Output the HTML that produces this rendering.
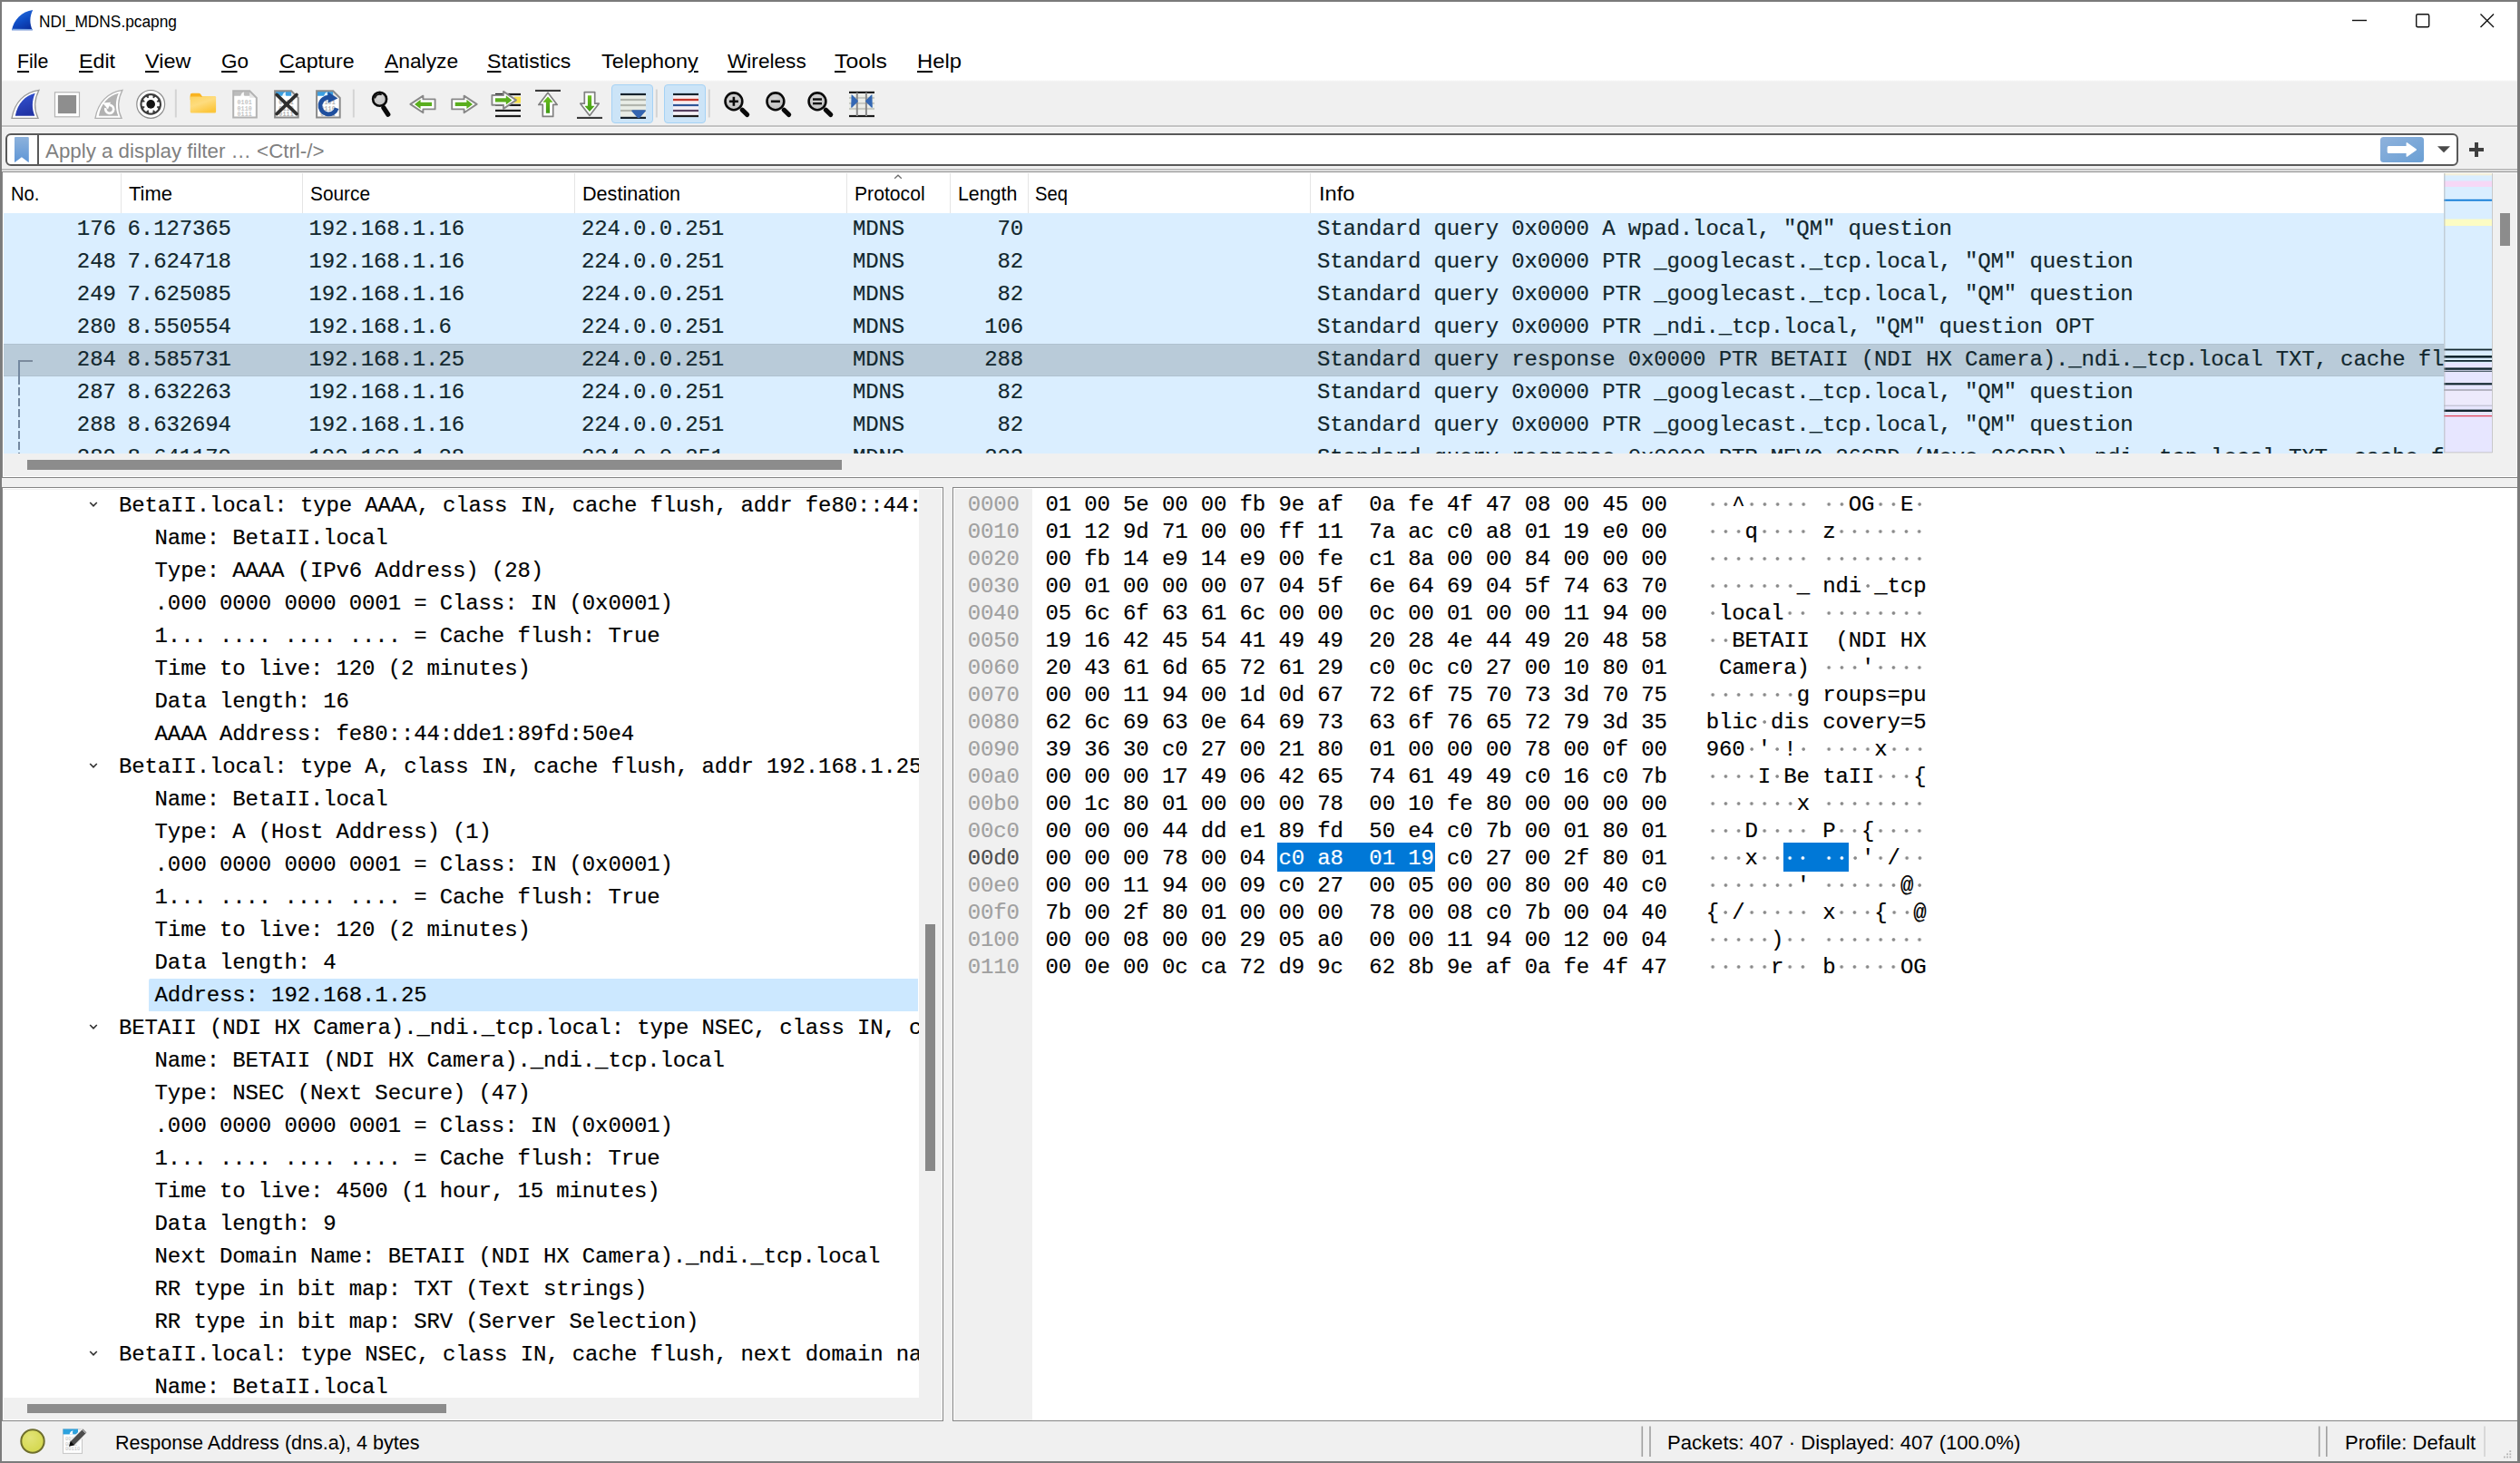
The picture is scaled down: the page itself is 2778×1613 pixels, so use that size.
<!DOCTYPE html>
<html><head><meta charset="utf-8"><title>NDI_MDNS.pcapng</title>
<style>
html,body{margin:0;padding:0}
body{width:2778px;height:1613px;position:relative;overflow:hidden;background:#f0f0f0;font-family:'Liberation Sans', sans-serif}
div,svg{box-sizing:border-box}
.a{position:absolute}
.s{position:absolute;white-space:pre;font-family:'Liberation Sans', sans-serif;transform-origin:0 0}
.s u{text-decoration-thickness:1.5px;text-underline-offset:2.5px}
.dg,.dw{color:transparent;background-size:14.28px 24.0px;background-repeat:repeat-x;background-position:0 1.6px}
.dg{background-image:radial-gradient(circle at 50% 50%,#8a8a8a 0,#8a8a8a 1.35px,rgba(138,138,138,0) 2.25px)}
.dw{background-image:radial-gradient(circle at 50% 50%,#fff 0,#fff 1.35px,rgba(255,255,255,0) 2.25px)}
.m{position:absolute;white-space:pre;-webkit-text-stroke:0.18px;font-family:'Liberation Mono', monospace;font-size:24.0px;line-height:24.0px;letter-spacing:-0.1226px}
</style></head><body>
<!-- title + menu -->
<div class="a" style="left:0;top:0;width:2778px;height:88.5px;background:#fff"></div>
<div class="a" style="left:0;top:88px;width:2778px;height:2px;background:linear-gradient(#fff,#f0f0f0)"></div>
<!-- toolbar bottom line -->
<div class="a" style="left:0;top:138px;width:2778px;height:2px;background:#c3c3c3"></div>
<div class="a" style="left:0;top:140px;width:2778px;height:1px;background:#f8f8f8"></div>
<!-- filter box -->
<div class="a" style="left:6px;top:147px;width:2704px;height:36px;background:#fff;border:2px solid #595959;border-radius:6px"></div>
<div class="a" style="left:41px;top:149px;width:2px;height:32px;background:#595959"></div>
<div class="a" style="left:0;top:186px;width:2778px;height:2px;background:#bfbfbf"></div>
<div class="a" style="left:0;top:188px;width:2778px;height:1px;background:#fafafa"></div>
<div class="a" style="left:0;top:189px;width:2778px;height:1.5px;background:#828282"></div>
<!-- packet list frame -->
<div class="a" style="left:2px;top:190px;width:2774px;height:337px;background:#f0f0f0;border:1px solid #858585;border-top:none;box-shadow:inset 0 0 0 1px #fff"></div>
<div class="a" style="left:3px;top:190px;width:2691px;height:46px;background:#fff"></div>
<div class="a" style="left:133px;top:191px;width:1px;height:44px;background:#e5e5e5"></div><div class="a" style="left:333px;top:191px;width:1px;height:44px;background:#e5e5e5"></div><div class="a" style="left:633px;top:191px;width:1px;height:44px;background:#e5e5e5"></div><div class="a" style="left:933px;top:191px;width:1px;height:44px;background:#e5e5e5"></div><div class="a" style="left:1047px;top:191px;width:1px;height:44px;background:#e5e5e5"></div><div class="a" style="left:1133px;top:191px;width:1px;height:44px;background:#e5e5e5"></div><div class="a" style="left:1444px;top:191px;width:1px;height:44px;background:#e5e5e5"></div>
<div id="plist" style="position:absolute;left:4px;top:235.2px;width:2690px;height:264.6px;overflow:hidden;background:#daeeff">
<div class="m" style="left:80.86px;top:5.89px;color:#12272e;">176</div>
<div class="m" style="left:136.60px;top:5.89px;color:#12272e;">6.127365</div>
<div class="m" style="left:336.60px;top:5.89px;color:#12272e;">192.168.1.16</div>
<div class="m" style="left:637.00px;top:5.89px;color:#12272e;">224.0.0.251</div>
<div class="m" style="left:936.00px;top:5.89px;color:#12272e;">MDNS</div>
<div class="m" style="left:1095.54px;top:5.89px;color:#12272e;">70</div>
<div class="m" style="left:1448.00px;top:5.89px;color:#12272e;">Standard query 0x0000 A wpad.local, &quot;QM&quot; question</div>
<div class="m" style="left:80.86px;top:41.89px;color:#12272e;">248</div>
<div class="m" style="left:136.60px;top:41.89px;color:#12272e;">7.624718</div>
<div class="m" style="left:336.60px;top:41.89px;color:#12272e;">192.168.1.16</div>
<div class="m" style="left:637.00px;top:41.89px;color:#12272e;">224.0.0.251</div>
<div class="m" style="left:936.00px;top:41.89px;color:#12272e;">MDNS</div>
<div class="m" style="left:1095.54px;top:41.89px;color:#12272e;">82</div>
<div class="m" style="left:1448.00px;top:41.89px;color:#12272e;">Standard query 0x0000 PTR _googlecast._tcp.local, &quot;QM&quot; question</div>
<div class="m" style="left:80.86px;top:77.89px;color:#12272e;">249</div>
<div class="m" style="left:136.60px;top:77.89px;color:#12272e;">7.625085</div>
<div class="m" style="left:336.60px;top:77.89px;color:#12272e;">192.168.1.16</div>
<div class="m" style="left:637.00px;top:77.89px;color:#12272e;">224.0.0.251</div>
<div class="m" style="left:936.00px;top:77.89px;color:#12272e;">MDNS</div>
<div class="m" style="left:1095.54px;top:77.89px;color:#12272e;">82</div>
<div class="m" style="left:1448.00px;top:77.89px;color:#12272e;">Standard query 0x0000 PTR _googlecast._tcp.local, &quot;QM&quot; question</div>
<div class="m" style="left:80.86px;top:113.89px;color:#12272e;">280</div>
<div class="m" style="left:136.60px;top:113.89px;color:#12272e;">8.550554</div>
<div class="m" style="left:336.60px;top:113.89px;color:#12272e;">192.168.1.6</div>
<div class="m" style="left:637.00px;top:113.89px;color:#12272e;">224.0.0.251</div>
<div class="m" style="left:936.00px;top:113.89px;color:#12272e;">MDNS</div>
<div class="m" style="left:1081.26px;top:113.89px;color:#12272e;">106</div>
<div class="m" style="left:1448.00px;top:113.89px;color:#12272e;">Standard query 0x0000 PTR _ndi._tcp.local, &quot;QM&quot; question OPT</div>
<div style="position:absolute;left:0px;top:144px;width:2700px;height:35.8px;background:#b9cbd9;border-top:1px solid #afc1d0;border-bottom:1px solid #afc1d0"></div>
<div class="m" style="left:80.86px;top:149.89px;color:#12272e;">284</div>
<div class="m" style="left:136.60px;top:149.89px;color:#12272e;">8.585731</div>
<div class="m" style="left:336.60px;top:149.89px;color:#12272e;">192.168.1.25</div>
<div class="m" style="left:637.00px;top:149.89px;color:#12272e;">224.0.0.251</div>
<div class="m" style="left:936.00px;top:149.89px;color:#12272e;">MDNS</div>
<div class="m" style="left:1081.26px;top:149.89px;color:#12272e;">288</div>
<div class="m" style="left:1448.00px;top:149.89px;color:#12272e;">Standard query response 0x0000 PTR BETAII (NDI HX Camera)._ndi._tcp.local TXT, cache flush</div>
<div class="m" style="left:80.86px;top:185.89px;color:#12272e;">287</div>
<div class="m" style="left:136.60px;top:185.89px;color:#12272e;">8.632263</div>
<div class="m" style="left:336.60px;top:185.89px;color:#12272e;">192.168.1.16</div>
<div class="m" style="left:637.00px;top:185.89px;color:#12272e;">224.0.0.251</div>
<div class="m" style="left:936.00px;top:185.89px;color:#12272e;">MDNS</div>
<div class="m" style="left:1095.54px;top:185.89px;color:#12272e;">82</div>
<div class="m" style="left:1448.00px;top:185.89px;color:#12272e;">Standard query 0x0000 PTR _googlecast._tcp.local, &quot;QM&quot; question</div>
<div class="m" style="left:80.86px;top:221.89px;color:#12272e;">288</div>
<div class="m" style="left:136.60px;top:221.89px;color:#12272e;">8.632694</div>
<div class="m" style="left:336.60px;top:221.89px;color:#12272e;">192.168.1.16</div>
<div class="m" style="left:637.00px;top:221.89px;color:#12272e;">224.0.0.251</div>
<div class="m" style="left:936.00px;top:221.89px;color:#12272e;">MDNS</div>
<div class="m" style="left:1095.54px;top:221.89px;color:#12272e;">82</div>
<div class="m" style="left:1448.00px;top:221.89px;color:#12272e;">Standard query 0x0000 PTR _googlecast._tcp.local, &quot;QM&quot; question</div>
<div class="m" style="left:80.86px;top:257.89px;color:#12272e;">289</div>
<div class="m" style="left:136.60px;top:257.89px;color:#12272e;">8.641179</div>
<div class="m" style="left:336.60px;top:257.89px;color:#12272e;">192.168.1.28</div>
<div class="m" style="left:637.00px;top:257.89px;color:#12272e;">224.0.0.251</div>
<div class="m" style="left:936.00px;top:257.89px;color:#12272e;">MDNS</div>
<div class="m" style="left:1081.26px;top:257.89px;color:#12272e;">223</div>
<div class="m" style="left:1448.00px;top:257.89px;color:#12272e;">Standard query response 0x0000 PTR MEVO-26GBD (Mevo-26GBD)._ndi._tcp.local TXT, cache flush</div>
</div>
<!-- related packet marker -->
<div class="a" style="left:20px;top:397px;width:16px;height:2px;background:#7b8b9d"></div>
<div class="a" style="left:20px;top:397px;width:2px;height:27px;background:#7388a0"></div>
<div class="a" style="left:20px;top:427px;width:2px;height:72.8px;background:repeating-linear-gradient(#7388a0 0 9.3px,transparent 9.3px 12px)"></div>
<!-- hscroll thumb -->
<div class="a" style="left:30px;top:507px;width:898px;height:11px;background:#8c8c8c"></div>
<!-- minimap -->
<svg class="a" style="left:2690px;top:188px" width="62" height="316" viewBox="2690 188 62 316"><rect x="2694" y="191" width="53.5" height="308" fill="#daeeff"/><rect x="2694" y="191" width="53.5" height="2.4" fill="#f4f0dc"/><rect x="2694" y="199.5" width="53.5" height="6.5" fill="#f6d8f6"/><rect x="2694" y="400" width="53.5" height="99" fill="#e7e6ff"/><rect x="2694" y="219.8" width="53.5" height="1.8" fill="#0a78d6"/><rect x="2694" y="241.6" width="53.5" height="7.4" fill="#fcfcc4"/><rect x="2694" y="384.6" width="53.5" height="1.8" fill="#12272e"/><rect x="2694" y="392" width="53.5" height="2.6" fill="#12272e"/><rect x="2694" y="397" width="53.5" height="1.8" fill="#12272e"/><rect x="2694" y="405.4" width="53.5" height="2.4" fill="#12272e"/><rect x="2694" y="408.8" width="53.5" height="0.9" fill="#12272e"/><rect x="2694" y="422.2" width="53.5" height="2.2" fill="#12272e"/><rect x="2694" y="429.2" width="53.5" height="1.6" fill="#a8a8b4"/><rect x="2694" y="446.6" width="53.5" height="1" fill="#b0b0bc"/><rect x="2694" y="451.6" width="53.5" height="2.4" fill="#12272e"/><rect x="2694" y="458.2" width="53.5" height="1" fill="#e02030"/><rect x="2694" y="431" width="53.5" height="15.4" fill="#edeafc"/><rect x="2694.4" y="191" width="0.9" height="308" fill="#b4b8bc"/><rect x="2747" y="191" width="0.9" height="308" fill="#c4c4c4"/><rect x="2694" y="498.4" width="53.5" height="0.9" fill="#c4c4c4"/></svg>
<!-- vscroll thumb -->
<div class="a" style="left:2756px;top:235px;width:11px;height:36px;background:#8c8c8c"></div>
<!-- tree frame -->
<div class="a" style="left:2px;top:537px;width:1038px;height:1030px;background:#f0f0f0;border:1px solid #858585;box-shadow:inset 0 0 0 1px #fff"></div>
<div id="tree" style="position:absolute;left:3px;top:539.5px;width:1010.1px;height:1001.5px;overflow:hidden;background:#fff">
<svg style="position:absolute;left:93.4px;top:9.7px" width="14" height="14" viewBox="0 0 14 14"><path d="M3.2 5 L7 8.9 L10.8 5" fill="none" stroke="#2e2e2e" stroke-width="1.55"/></svg>
<div class="m" style="left:128.00px;top:6.49px;color:#000;">BetaII.local: type AAAA, class IN, cache flush, addr fe80::44:dde1:89fd:50e4</div>
<div class="m" style="left:167.60px;top:42.49px;color:#000;">Name: BetaII.local</div>
<div class="m" style="left:167.60px;top:78.49px;color:#000;">Type: AAAA (IPv6 Address) (28)</div>
<div class="m" style="left:167.60px;top:114.49px;color:#000;">.000 0000 0000 0001 = Class: IN (0x0001)</div>
<div class="m" style="left:167.60px;top:150.49px;color:#000;">1... .... .... .... = Cache flush: True</div>
<div class="m" style="left:167.60px;top:186.49px;color:#000;">Time to live: 120 (2 minutes)</div>
<div class="m" style="left:167.60px;top:222.49px;color:#000;">Data length: 16</div>
<div class="m" style="left:167.60px;top:258.49px;color:#000;">AAAA Address: fe80::44:dde1:89fd:50e4</div>
<svg style="position:absolute;left:93.4px;top:297.7px" width="14" height="14" viewBox="0 0 14 14"><path d="M3.2 5 L7 8.9 L10.8 5" fill="none" stroke="#2e2e2e" stroke-width="1.55"/></svg>
<div class="m" style="left:128.00px;top:294.49px;color:#000;">BetaII.local: type A, class IN, cache flush, addr 192.168.1.25</div>
<div class="m" style="left:167.60px;top:330.49px;color:#000;">Name: BetaII.local</div>
<div class="m" style="left:167.60px;top:366.49px;color:#000;">Type: A (Host Address) (1)</div>
<div class="m" style="left:167.60px;top:402.49px;color:#000;">.000 0000 0000 0001 = Class: IN (0x0001)</div>
<div class="m" style="left:167.60px;top:438.49px;color:#000;">1... .... .... .... = Cache flush: True</div>
<div class="m" style="left:167.60px;top:474.49px;color:#000;">Time to live: 120 (2 minutes)</div>
<div class="m" style="left:167.60px;top:510.49px;color:#000;">Data length: 4</div>
<div style="position:absolute;left:160.8px;top:539.6px;width:848.2px;height:35.9px;background:#cce8ff;border-radius:2px 0 0 0"></div>
<div class="m" style="left:167.60px;top:546.49px;color:#000;">Address: 192.168.1.25</div>
<svg style="position:absolute;left:93.4px;top:585.7px" width="14" height="14" viewBox="0 0 14 14"><path d="M3.2 5 L7 8.9 L10.8 5" fill="none" stroke="#2e2e2e" stroke-width="1.55"/></svg>
<div class="m" style="left:128.00px;top:582.49px;color:#000;">BETAII (NDI HX Camera)._ndi._tcp.local: type NSEC, class IN, cache flush, next domain name</div>
<div class="m" style="left:167.60px;top:618.49px;color:#000;">Name: BETAII (NDI HX Camera)._ndi._tcp.local</div>
<div class="m" style="left:167.60px;top:654.49px;color:#000;">Type: NSEC (Next Secure) (47)</div>
<div class="m" style="left:167.60px;top:690.49px;color:#000;">.000 0000 0000 0001 = Class: IN (0x0001)</div>
<div class="m" style="left:167.60px;top:726.49px;color:#000;">1... .... .... .... = Cache flush: True</div>
<div class="m" style="left:167.60px;top:762.49px;color:#000;">Time to live: 4500 (1 hour, 15 minutes)</div>
<div class="m" style="left:167.60px;top:798.49px;color:#000;">Data length: 9</div>
<div class="m" style="left:167.60px;top:834.49px;color:#000;">Next Domain Name: BETAII (NDI HX Camera)._ndi._tcp.local</div>
<div class="m" style="left:167.60px;top:870.49px;color:#000;">RR type in bit map: TXT (Text strings)</div>
<div class="m" style="left:167.60px;top:906.49px;color:#000;">RR type in bit map: SRV (Server Selection)</div>
<svg style="position:absolute;left:93.4px;top:945.7px" width="14" height="14" viewBox="0 0 14 14"><path d="M3.2 5 L7 8.9 L10.8 5" fill="none" stroke="#2e2e2e" stroke-width="1.55"/></svg>
<div class="m" style="left:128.00px;top:942.49px;color:#000;">BetaII.local: type NSEC, class IN, cache flush, next domain name BetaII.local</div>
<div class="m" style="left:167.60px;top:978.49px;color:#000;">Name: BetaII.local</div>
</div>
<div class="a" style="left:1020.2px;top:1019px;width:10.7px;height:272px;background:#888"></div>
<div class="a" style="left:30px;top:1548px;width:462px;height:10px;background:#8c8c8c"></div>
<!-- hex frame -->
<div class="a" style="left:1050px;top:537px;width:1726px;height:1030px;background:#fff;border:1px solid #858585"></div>
<div class="a" style="left:1052px;top:539px;width:86px;height:1027px;background:#f0f0f0"></div>
<div class="m" style="left:1066.70px;top:544.59px;color:#a0a0a0;">0000</div>
<div class="m" style="left:1152.38px;top:544.59px;color:#000;">01 00 5e 00 00 fb 9e af  0a fe 4f 47 08 00 45 00</div>
<div class="m" style="left:1880.66px;top:544.59px;color:#000"><span class="dg">··</span>^<span class="dg">·····</span> <span class="dg">··</span>OG<span class="dg">··</span>E<span class="dg">·</span></div>
<div class="m" style="left:1066.70px;top:574.59px;color:#a0a0a0;">0010</div>
<div class="m" style="left:1152.38px;top:574.59px;color:#000;">01 12 9d 71 00 00 ff 11  7a ac c0 a8 01 19 e0 00</div>
<div class="m" style="left:1880.66px;top:574.59px;color:#000"><span class="dg">···</span>q<span class="dg">····</span> z<span class="dg">·······</span></div>
<div class="m" style="left:1066.70px;top:604.59px;color:#a0a0a0;">0020</div>
<div class="m" style="left:1152.38px;top:604.59px;color:#000;">00 fb 14 e9 14 e9 00 fe  c1 8a 00 00 84 00 00 00</div>
<div class="m" style="left:1880.66px;top:604.59px;color:#000"><span class="dg">········</span> <span class="dg">········</span></div>
<div class="m" style="left:1066.70px;top:634.59px;color:#a0a0a0;">0030</div>
<div class="m" style="left:1152.38px;top:634.59px;color:#000;">00 01 00 00 00 07 04 5f  6e 64 69 04 5f 74 63 70</div>
<div class="m" style="left:1880.66px;top:634.59px;color:#000"><span class="dg">·······</span>_ ndi<span class="dg">·</span>_tcp</div>
<div class="m" style="left:1066.70px;top:664.59px;color:#a0a0a0;">0040</div>
<div class="m" style="left:1152.38px;top:664.59px;color:#000;">05 6c 6f 63 61 6c 00 00  0c 00 01 00 00 11 94 00</div>
<div class="m" style="left:1880.66px;top:664.59px;color:#000"><span class="dg">·</span>local<span class="dg">··</span> <span class="dg">········</span></div>
<div class="m" style="left:1066.70px;top:694.59px;color:#a0a0a0;">0050</div>
<div class="m" style="left:1152.38px;top:694.59px;color:#000;">19 16 42 45 54 41 49 49  20 28 4e 44 49 20 48 58</div>
<div class="m" style="left:1880.66px;top:694.59px;color:#000"><span class="dg">··</span>BETAII  (NDI HX</div>
<div class="m" style="left:1066.70px;top:724.59px;color:#a0a0a0;">0060</div>
<div class="m" style="left:1152.38px;top:724.59px;color:#000;">20 43 61 6d 65 72 61 29  c0 0c c0 27 00 10 80 01</div>
<div class="m" style="left:1880.66px;top:724.59px;color:#000"> Camera) <span class="dg">···</span>&#x27;<span class="dg">····</span></div>
<div class="m" style="left:1066.70px;top:754.59px;color:#a0a0a0;">0070</div>
<div class="m" style="left:1152.38px;top:754.59px;color:#000;">00 00 11 94 00 1d 0d 67  72 6f 75 70 73 3d 70 75</div>
<div class="m" style="left:1880.66px;top:754.59px;color:#000"><span class="dg">·······</span>g roups=pu</div>
<div class="m" style="left:1066.70px;top:784.59px;color:#a0a0a0;">0080</div>
<div class="m" style="left:1152.38px;top:784.59px;color:#000;">62 6c 69 63 0e 64 69 73  63 6f 76 65 72 79 3d 35</div>
<div class="m" style="left:1880.66px;top:784.59px;color:#000">blic<span class="dg">·</span>dis covery=5</div>
<div class="m" style="left:1066.70px;top:814.59px;color:#a0a0a0;">0090</div>
<div class="m" style="left:1152.38px;top:814.59px;color:#000;">39 36 30 c0 27 00 21 80  01 00 00 00 78 00 0f 00</div>
<div class="m" style="left:1880.66px;top:814.59px;color:#000">960<span class="dg">·</span>&#x27;<span class="dg">·</span>!<span class="dg">·</span> <span class="dg">····</span>x<span class="dg">···</span></div>
<div class="m" style="left:1066.70px;top:844.59px;color:#a0a0a0;">00a0</div>
<div class="m" style="left:1152.38px;top:844.59px;color:#000;">00 00 00 17 49 06 42 65  74 61 49 49 c0 16 c0 7b</div>
<div class="m" style="left:1880.66px;top:844.59px;color:#000"><span class="dg">····</span>I<span class="dg">·</span>Be taII<span class="dg">···</span>{</div>
<div class="m" style="left:1066.70px;top:874.59px;color:#a0a0a0;">00b0</div>
<div class="m" style="left:1152.38px;top:874.59px;color:#000;">00 1c 80 01 00 00 00 78  00 10 fe 80 00 00 00 00</div>
<div class="m" style="left:1880.66px;top:874.59px;color:#000"><span class="dg">·······</span>x <span class="dg">········</span></div>
<div class="m" style="left:1066.70px;top:904.59px;color:#a0a0a0;">00c0</div>
<div class="m" style="left:1152.38px;top:904.59px;color:#000;">00 00 00 44 dd e1 89 fd  50 e4 c0 7b 00 01 80 01</div>
<div class="m" style="left:1880.66px;top:904.59px;color:#000"><span class="dg">···</span>D<span class="dg">····</span> P<span class="dg">··</span>{<span class="dg">····</span></div>
<div class="m" style="left:1066.70px;top:934.59px;color:#4e4e4e;">00d0</div>
<div style="position:absolute;left:1407.9px;top:929.4px;width:174.0px;height:31.2px;background:#0078d7"></div>
<div style="position:absolute;left:1966.4px;top:929.4px;width:71.4px;height:31.2px;background:#0078d7"></div>
<div class="m" style="left:1152.38px;top:934.59px;color:#000;">00 00 00 78 00 04 </div>
<div class="m" style="left:1409.42px;top:934.59px;color:#fff;">c0 a8  01 19</div>
<div class="m" style="left:1580.78px;top:934.59px;color:#000;"> c0 27 00 2f 80 01</div>
<div class="m" style="left:1880.66px;top:934.59px;color:#000"><span class="dg">···</span>x<span class="dg">··</span></div>
<div class="m" style="left:1966.34px;top:934.59px;color:#fff"><span class="dw">··</span> <span class="dw">··</span></div>
<div class="m" style="left:2037.74px;top:934.59px;color:#000"><span class="dg">·</span>&#x27;<span class="dg">·</span>/<span class="dg">··</span></div>
<div class="m" style="left:1066.70px;top:964.59px;color:#a0a0a0;">00e0</div>
<div class="m" style="left:1152.38px;top:964.59px;color:#000;">00 00 11 94 00 09 c0 27  00 05 00 00 80 00 40 c0</div>
<div class="m" style="left:1880.66px;top:964.59px;color:#000"><span class="dg">·······</span>&#x27; <span class="dg">······</span>@<span class="dg">·</span></div>
<div class="m" style="left:1066.70px;top:994.59px;color:#a0a0a0;">00f0</div>
<div class="m" style="left:1152.38px;top:994.59px;color:#000;">7b 00 2f 80 01 00 00 00  78 00 08 c0 7b 00 04 40</div>
<div class="m" style="left:1880.66px;top:994.59px;color:#000">{<span class="dg">·</span>/<span class="dg">·····</span> x<span class="dg">···</span>{<span class="dg">··</span>@</div>
<div class="m" style="left:1066.70px;top:1024.59px;color:#a0a0a0;">0100</div>
<div class="m" style="left:1152.38px;top:1024.59px;color:#000;">00 00 08 00 00 29 05 a0  00 00 11 94 00 12 00 04</div>
<div class="m" style="left:1880.66px;top:1024.59px;color:#000"><span class="dg">·····</span>)<span class="dg">··</span> <span class="dg">········</span></div>
<div class="m" style="left:1066.70px;top:1054.59px;color:#a0a0a0;">0110</div>
<div class="m" style="left:1152.38px;top:1054.59px;color:#000;">00 0e 00 0c ca 72 d9 9c  62 8b 9e af 0a fe 4f 47</div>
<div class="m" style="left:1880.66px;top:1054.59px;color:#000"><span class="dg">·····</span>r<span class="dg">··</span> b<span class="dg">·····</span>OG</div>
<!-- status bar -->
<svg class="a" style="left:0px;top:1567px" width="2778" height="44" viewBox="0 1567 2778 44"><defs><radialGradient id="yl" cx="0.4" cy="0.35" r="0.75"><stop offset="0" stop-color="#e2e478"/><stop offset="1" stop-color="#d2d648"/></radialGradient></defs><circle cx="36" cy="1589" r="12.7" fill="url(#yl)" stroke="#6e6e2c" stroke-width="2"/><rect x="69.5" y="1575.8" width="21" height="26.6" fill="#fdfdfd" stroke="#c6c6c6" stroke-width="1"/><path d="M69.5,1575.5 L86,1575.5 L86,1581.4 L69.5,1581.4 Z" fill="#2ea2de"/><path d="M76.5,1581.6 C77,1579 78.5,1577.6 80.5,1577.2 C79.8,1578.8 79.9,1580.2 80.6,1581.6 Z" fill="#fff"/><text x="72" y="1588.0" font-family="Liberation Mono" font-size="5.4" fill="#bdbdbd">0010</text><text x="72" y="1593.6" font-family="Liberation Mono" font-size="5.4" fill="#bdbdbd">0011</text><text x="72" y="1599.2" font-family="Liberation Mono" font-size="5.4" fill="#bdbdbd">00110</text><line x1="79.5" y1="1591.5" x2="93" y2="1578" stroke="#f0f0f0" stroke-width="8.5"/><line x1="80" y1="1591" x2="93.4" y2="1577.6" stroke="#4c4c4c" stroke-width="5.6"/><line x1="90.6" y1="1576.2" x2="94.8" y2="1580.4" stroke="#f0f0f0" stroke-width="1"/><path d="M76,1594.8 L77.8,1588.6 L82.4,1593.2 Z" fill="#0c0c0c"/><rect x="1809.5" y="1572.5" width="1.6" height="33.5" fill="#a0a0a0"/><rect x="1818.2" y="1572.5" width="1.6" height="33.5" fill="#a0a0a0"/><rect x="2555.8999999999996" y="1572.5" width="1.6" height="33.5" fill="#a0a0a0"/><rect x="2564.0" y="1572.5" width="1.6" height="33.5" fill="#a0a0a0"/><rect x="2738.4" y="1572.5" width="1.2" height="33.5" fill="#c8c8c8"/><rect x="2766.4" y="1599.2" width="1.8" height="1.8" fill="#b4b4b4"/><rect x="2763.2" y="1602.4" width="1.8" height="1.8" fill="#b4b4b4"/><rect x="2766.4" y="1602.4" width="1.8" height="1.8" fill="#b4b4b4"/><rect x="2760" y="1605.6" width="1.8" height="1.8" fill="#b4b4b4"/><rect x="2763.2" y="1605.6" width="1.8" height="1.8" fill="#b4b4b4"/><rect x="2766.4" y="1605.6" width="1.8" height="1.8" fill="#b4b4b4"/></svg>
<!-- sans text -->
<div class="s" style="left:43.0px;top:14.76px;font-size:18px;line-height:18px;transform:scaleX(0.9616);color:#000">NDI_MDNS.pcapng</div>
<div class="s" style="left:18.9px;top:56.88px;font-size:22px;line-height:22px;transform:scaleX(0.9703);color:#000"><u>F</u>ile</div>
<div class="s" style="left:86.7px;top:56.88px;font-size:22px;line-height:22px;transform:scaleX(1.0548);color:#000"><u>E</u>dit</div>
<div class="s" style="left:160.4px;top:56.88px;font-size:22px;line-height:22px;transform:scaleX(1.0635);color:#000"><u>V</u>iew</div>
<div class="s" style="left:244.4px;top:56.88px;font-size:22px;line-height:22px;transform:scaleX(1.0218);color:#000"><u>G</u>o</div>
<div class="s" style="left:308.4px;top:56.88px;font-size:22px;line-height:22px;transform:scaleX(1.0552);color:#000"><u>C</u>apture</div>
<div class="s" style="left:424.4px;top:56.88px;font-size:22px;line-height:22px;transform:scaleX(1.0360);color:#000"><u>A</u>nalyze</div>
<div class="s" style="left:537.3px;top:56.88px;font-size:22px;line-height:22px;transform:scaleX(1.0485);color:#000"><u>S</u>tatistics</div>
<div class="s" style="left:663.3px;top:56.88px;font-size:22px;line-height:22px;transform:scaleX(1.0637);color:#000">Telephon<u>y</u></div>
<div class="s" style="left:802.2px;top:56.88px;font-size:22px;line-height:22px;transform:scaleX(1.0279);color:#000"><u>W</u>ireless</div>
<div class="s" style="left:920.0px;top:56.88px;font-size:22px;line-height:22px;transform:scaleX(1.1254);color:#000"><u>T</u>ools</div>
<div class="s" style="left:1010.7px;top:56.88px;font-size:22px;line-height:22px;transform:scaleX(1.0807);color:#000"><u>H</u>elp</div>
<div class="s" style="left:50.0px;top:155.95px;font-size:22.5px;line-height:22.5px;transform:scaleX(0.9915);color:#808080">Apply a display filter … &lt;Ctrl-/&gt;</div>
<div class="s" style="left:12.2px;top:203.50px;font-size:21.5px;line-height:21.5px;transform:scaleX(0.9412);color:#000">No.</div>
<div class="s" style="left:142.0px;top:203.50px;font-size:21.5px;line-height:21.5px;transform:scaleX(1.0216);color:#000">Time</div>
<div class="s" style="left:342.0px;top:203.50px;font-size:21.5px;line-height:21.5px;transform:scaleX(0.9688);color:#000">Source</div>
<div class="s" style="left:642.0px;top:203.50px;font-size:21.5px;line-height:21.5px;transform:scaleX(1.0039);color:#000">Destination</div>
<div class="s" style="left:942.0px;top:203.50px;font-size:21.5px;line-height:21.5px;transform:scaleX(0.9838);color:#000">Protocol</div>
<div class="s" style="left:1055.7px;top:203.50px;font-size:21.5px;line-height:21.5px;transform:scaleX(0.9929);color:#000">Length</div>
<div class="s" style="left:1141.0px;top:203.50px;font-size:21.5px;line-height:21.5px;transform:scaleX(0.9408);color:#000">Seq</div>
<div class="s" style="left:1453.6px;top:203.50px;font-size:21.5px;line-height:21.5px;transform:scaleX(1.0983);color:#000">Info</div>
<div class="s" style="left:126.6px;top:1580.12px;font-size:22.3px;line-height:22.3px;transform:scaleX(0.9665);color:#000">Response Address (dns.a), 4 bytes</div>
<div class="s" style="left:1837.7px;top:1580.12px;font-size:22.3px;line-height:22.3px;transform:scaleX(0.9909);color:#000">Packets: 407 · Displayed: 407 (100.0%)</div>
<div class="s" style="left:2584.8px;top:1580.12px;font-size:22.3px;line-height:22.3px;transform:scaleX(0.9860);color:#000">Profile: Default</div>
<!-- icons -->
<svg class="a" style="left:0px;top:0px" width="60" height="44" viewBox="0 0 60 44"><defs><linearGradient id="tfin" x1="0.2" y1="0" x2="0.7" y2="1"><stop offset="0" stop-color="#2a72e0"/><stop offset="0.55" stop-color="#0e4cc4"/><stop offset="1" stop-color="#0a2f9e"/></linearGradient></defs><path d="M13,33.3 C15,22 24,12.5 36.2,10.9 C32.6,18 32.4,26 36,33.3 Z" fill="url(#tfin)"/><path d="M13,33.3 C13.3,32.6 13.6,32.2 14,31.8 L35.5,32 L36,33.3 Z" fill="#8db8ee" opacity=".85"/></svg><svg class="a" style="left:2580px;top:0px" width="190" height="44" viewBox="2580 0 190 44"><line x1="2593" y1="22.5" x2="2609" y2="22.5" stroke="#111" stroke-width="1.4"/><rect x="2663.7" y="15.7" width="14" height="14" rx="1.5" fill="none" stroke="#111" stroke-width="1.4"/><path d="M2734.5,15.5 L2749,30 M2749,15.5 L2734.5,30" stroke="#111" stroke-width="1.4" fill="none"/></svg>
<svg class="a" style="left:0px;top:90px" width="1000" height="50" viewBox="0 90 1000 50"><defs>
<linearGradient id="finb" x1="0" y1="0" x2="0.3" y2="1"><stop offset="0" stop-color="#3557d6"/><stop offset="1" stop-color="#2234a6"/></linearGradient>
<radialGradient id="lens" cx="0.45" cy="0.4" r="0.7"><stop offset="0" stop-color="#d6d6d6"/><stop offset="1" stop-color="#bcbcbc"/></radialGradient>
<linearGradient id="grn" x1="0" y1="0" x2="0" y2="1"><stop offset="0" stop-color="#6cc01e"/><stop offset="1" stop-color="#3f9a14"/></linearGradient>
<linearGradient id="fold" x1="0" y1="0" x2="0.55" y2="1"><stop offset="0" stop-color="#fcd25e"/><stop offset="0.5" stop-color="#fedc7e"/><stop offset="1" stop-color="#fcc63c"/></linearGradient>
</defs><path d="M13,130.4 C16,113 27,101.5 43,99.3 C37.5,110 37.5,121 42,130.4 Z" fill="#fff" stroke="#9a9a9a" stroke-width="1.3"/><path d="M16.8,127.8 C19.5,114 28,105 38.8,102.8 C35,111 35,120 38.3,127.8 Z" fill="url(#finb)"/><rect x="60.5" y="101.8" width="27" height="27" fill="#fff" stroke="#b4b4b4" stroke-width="1.2"/><rect x="63.9" y="104.9" width="20.2" height="20.2" fill="#8e8e8e"/><path d="M105,130.4 C108,113 119,101.5 135,99.3 C129.5,110 129.5,121 134,130.4 Z" fill="#fff" stroke="#b0b0b0" stroke-width="1.3"/><path d="M108.8,127.8 C111.5,114 120,105 130.8,102.8 C127,111 127,120 130.3,127.8 Z" fill="#b2b2b2"/><path d="M116.4,119.2 A4.5,4.5 0 1 0 120.4,115.9" fill="none" stroke="#fff" stroke-width="2.7"/><path d="M113.2,113.6 L122,112.8 L119,120.6 Z" fill="#fff"/><circle cx="166.2" cy="114.9" r="15.4" fill="#fff" stroke="#8c8c8c" stroke-width="1.2"/><circle cx="166.2" cy="114.9" r="11.8" fill="#3c3c3c"/><rect x="-2.3" y="-9.6" width="4.6" height="5" rx="1" fill="#fff" transform="translate(166.2,114.9) rotate(0)"/><rect x="-2.3" y="-9.6" width="4.6" height="5" rx="1" fill="#fff" transform="translate(166.2,114.9) rotate(45)"/><rect x="-2.3" y="-9.6" width="4.6" height="5" rx="1" fill="#fff" transform="translate(166.2,114.9) rotate(90)"/><rect x="-2.3" y="-9.6" width="4.6" height="5" rx="1" fill="#fff" transform="translate(166.2,114.9) rotate(135)"/><rect x="-2.3" y="-9.6" width="4.6" height="5" rx="1" fill="#fff" transform="translate(166.2,114.9) rotate(180)"/><rect x="-2.3" y="-9.6" width="4.6" height="5" rx="1" fill="#fff" transform="translate(166.2,114.9) rotate(225)"/><rect x="-2.3" y="-9.6" width="4.6" height="5" rx="1" fill="#fff" transform="translate(166.2,114.9) rotate(270)"/><rect x="-2.3" y="-9.6" width="4.6" height="5" rx="1" fill="#fff" transform="translate(166.2,114.9) rotate(315)"/><circle cx="166.2" cy="114.9" r="7.3" fill="#fff"/><circle cx="166.2" cy="114.9" r="4.8" fill="#141414"/><rect x="192.8" y="98.5" width="2" height="31" fill="#d4d4d4"/><rect x="388.8" y="98.5" width="2" height="31" fill="#d4d4d4"/><rect x="722.8" y="98.5" width="2" height="31" fill="#d4d4d4"/><rect x="780.8" y="98.5" width="2" height="31" fill="#d4d4d4"/><path d="M209.7,105 Q209.7,102.8 211.9,102.8 L219,102.8 Q220.5,102.8 221.3,104 L222.6,106 L209.7,110 Z" fill="#f9b320"/><path d="M209.7,107.2 Q209.7,106 211,106 L236.9,106 Q238.1,106 238.1,107.2 L238.1,123 Q238.1,124.6 236.6,124.6 L211.2,124.6 Q209.7,124.6 209.7,123 Z" fill="url(#fold)"/><path d="M209.7,106.6 L220.5,106.6 L222.2,105.9 L222.6,106 L222.6,107 L209.7,107 Z" fill="#f9b320"/><path d="M257.2,100.2 L275.2,100.2 L282.8,107.8 L282.8,129.6 L257.2,129.6 Z" fill="#fff"/><path d="M257.2,100.2 L275.2,100.2 L280.8,105.7 L257.2,105.7 Z" fill="#bcbcbc"/><path d="M265.2,106.2 C265.7,103.2 267.2,101.7 269.2,101.2 C268.5,103.2 268.7,104.7 269.7,106.2 Z" fill="#fff" opacity=".9"/><path d="M275.2,100.2 L275.2,107.8 L282.8,107.8 Z" fill="#e6e6e6"/><path d="M257.2,100.2 L275.2,100.2 L282.8,107.8 L282.8,129.6 L257.2,129.6 Z" fill="none" stroke="#b2b2b2" stroke-width="2"/><text x="261.4" y="115.4" font-family="Liberation Mono" font-size="6.6" font-weight="bold" fill="#c4c4c4" letter-spacing="0.2">0101</text><text x="261.4" y="121.5" font-family="Liberation Mono" font-size="6.6" font-weight="bold" fill="#c4c4c4" letter-spacing="0.2">0110</text><text x="261.4" y="127.60000000000001" font-family="Liberation Mono" font-size="6.6" font-weight="bold" fill="#c4c4c4" letter-spacing="0.2">0111</text><path d="M303.1,100.2 L321.1,100.2 L328.70000000000005,107.8 L328.70000000000005,129.6 L303.1,129.6 Z" fill="#fff"/><path d="M303.1,100.2 L321.1,100.2 L326.70000000000005,105.7 L303.1,105.7 Z" fill="#3b9fe2"/><path d="M311.1,106.2 C311.6,103.2 313.1,101.7 315.1,101.2 C314.40000000000003,103.2 314.6,104.7 315.6,106.2 Z" fill="#fff" opacity=".9"/><path d="M321.1,100.2 L321.1,107.8 L328.70000000000005,107.8 Z" fill="#e6e6e6"/><path d="M303.1,100.2 L321.1,100.2 L328.70000000000005,107.8 L328.70000000000005,129.6 L303.1,129.6 Z" fill="none" stroke="#8a8a8a" stroke-width="2"/><text x="307.3" y="115.4" font-family="Liberation Mono" font-size="6.6" font-weight="bold" fill="#b0b0b0" letter-spacing="0.2">0101</text><text x="307.3" y="121.5" font-family="Liberation Mono" font-size="6.6" font-weight="bold" fill="#b0b0b0" letter-spacing="0.2">0110</text><text x="307.3" y="127.60000000000001" font-family="Liberation Mono" font-size="6.6" font-weight="bold" fill="#b0b0b0" letter-spacing="0.2">0111</text><line x1="305" y1="104.4" x2="327" y2="125.6" stroke="#2e2e2e" stroke-width="3.6" stroke-linecap="round"/><line x1="327" y1="104.4" x2="305" y2="125.6" stroke="#2e2e2e" stroke-width="3.6" stroke-linecap="round"/><path d="M349.1,100.2 L367.1,100.2 L374.70000000000005,107.8 L374.70000000000005,129.6 L349.1,129.6 Z" fill="#fff"/><path d="M349.1,100.2 L367.1,100.2 L372.70000000000005,105.7 L349.1,105.7 Z" fill="#3b9fe2"/><path d="M357.1,106.2 C357.6,103.2 359.1,101.7 361.1,101.2 C360.40000000000003,103.2 360.6,104.7 361.6,106.2 Z" fill="#fff" opacity=".9"/><path d="M367.1,100.2 L367.1,107.8 L374.70000000000005,107.8 Z" fill="#e6e6e6"/><path d="M349.1,100.2 L367.1,100.2 L374.70000000000005,107.8 L374.70000000000005,129.6 L349.1,129.6 Z" fill="none" stroke="#8a8a8a" stroke-width="2"/><text x="353.3" y="115.4" font-family="Liberation Mono" font-size="6.6" font-weight="bold" fill="#b0b0b0" letter-spacing="0.2">0101</text><text x="353.3" y="121.5" font-family="Liberation Mono" font-size="6.6" font-weight="bold" fill="#b0b0b0" letter-spacing="0.2">0110</text><text x="353.3" y="127.60000000000001" font-family="Liberation Mono" font-size="6.6" font-weight="bold" fill="#b0b0b0" letter-spacing="0.2">0111</text><path d="M371.2,119.2 A9.3,9.3 0 1 1 363.0,107.3" fill="none" stroke="#1f4f9e" stroke-width="4.8"/><path d="M361.6,101.2 L372.4,108.4 L361.6,113.4 Z" fill="#1f4f9e"/><line x1="422.9" y1="118.8" x2="427.8" y2="126.2" stroke="#0a0a0a" stroke-width="5.2" stroke-linecap="round"/><circle cx="418.6" cy="109.3" r="7.5" fill="url(#lens)" stroke="#0a0a0a" stroke-width="2.6"/><path d="M413.40000000000003,107.8 A5.6,5.6 0 0 1 420.1,104.1" fill="none" stroke="#0a0a0a" stroke-width="1.6" stroke-linecap="round"/><path d="M479.60,109.40 L466.40,109.40 L466.40,105.60 L452.40,114.90 L466.40,124.20 L466.40,120.40 L479.60,120.40 Z" fill="#fff" stroke="#888" stroke-width="1.9" stroke-linejoin="round"/><path d="M476.10,112.80 L463.60,112.80 L463.60,109.70 L457.00,114.90 L463.60,120.10 L463.60,117.00 L476.10,117.00 Z" fill="#5aae1e"/><path d="M498.20,109.40 L511.60,109.40 L511.60,105.60 L525.60,114.90 L511.60,124.20 L511.60,120.40 L498.20,120.40 Z" fill="#fff" stroke="#888" stroke-width="1.9" stroke-linejoin="round"/><path d="M501.70,112.80 L514.40,112.80 L514.40,109.70 L521.00,114.90 L514.40,120.10 L514.40,117.00 L501.70,117.00 Z" fill="#5aae1e"/><rect x="567" y="106.6" width="7" height="7" fill="#f5e04a"/><rect x="546" y="102.9" width="28" height="2.2" fill="#1c1c1c"/><rect x="546" y="114.80000000000001" width="28" height="2.2" fill="#1c1c1c"/><rect x="546" y="120.80000000000001" width="28" height="2.2" fill="#1c1c1c"/><rect x="546" y="126.9" width="28" height="2.2" fill="#1c1c1c"/><path d="M542.40,105.00 L555.00,105.00 L555.00,100.90 L569.00,110.40 L555.00,119.90 L555.00,115.80 L542.40,115.80 Z" fill="#fff" stroke="#888" stroke-width="1.9" stroke-linejoin="round"/><path d="M545.90,108.30 L557.80,108.30 L557.80,105.20 L564.40,110.40 L557.80,115.60 L557.80,112.50 L545.90,112.50 Z" fill="#5aae1e"/><rect x="590" y="98.9" width="28" height="2.1" fill="#3a3a3a"/><path d="M604.00,102.20 L614.20,115.40 L609.70,115.40 L609.70,128.40 L598.30,128.40 L598.30,115.40 L593.80,115.40 Z" fill="#fff" stroke="#808080" stroke-width="1.7" stroke-linejoin="round"/><path d="M604.00,106.60 L609.60,112.80 L606.10,112.80 L606.10,124.80 L601.90,124.80 L601.90,112.80 L598.40,112.80 Z" fill="url(#grn)"/><rect x="636" y="128.9" width="28" height="2.1" fill="#3a3a3a"/><path d="M650.00,127.40 L660.20,114.20 L655.70,114.20 L655.70,101.60 L644.30,101.60 L644.30,114.20 L639.80,114.20 Z" fill="#fff" stroke="#808080" stroke-width="1.7" stroke-linejoin="round"/><path d="M650.00,123.00 L655.60,116.80 L652.10,116.80 L652.10,105.20 L647.90,105.20 L647.90,116.80 L644.40,116.80 Z" fill="url(#grn)"/><rect x="674.5" y="93.5" width="45" height="42" rx="3.5" fill="#cce4f7" stroke="#a5d2f5" stroke-width="1"/><rect x="684" y="104" width="28" height="26" fill="#e9ede6"/><rect x="684" y="102.9" width="28" height="2.2" fill="#16222c"/><rect x="684" y="108.9" width="28" height="2.2" fill="#b2b6ae"/><rect x="684" y="114.9" width="28" height="2.2" fill="#b2b6ae"/><rect x="684" y="120.9" width="28" height="2.2" fill="#b2b6ae"/><rect x="684" y="128.8" width="28" height="2.2" fill="#16222c"/><path d="M697.5,121.2 L710.5,121.2 Q712.6,121.2 711.4,123 L705.6,129.6 Q704,131 702.4,129.6 L696.6,123 Q695.4,121.2 697.5,121.2 Z" fill="#3465b0"/><rect x="732.5" y="93.5" width="45" height="42" rx="3.5" fill="#cce4f7" stroke="#a5d2f5" stroke-width="1"/><rect x="742" y="104" width="28" height="24" fill="#f4f0f6"/><rect x="742" y="107.5" width="28" height="5" fill="#fde4e0"/><rect x="742" y="102.9" width="28" height="2.2" fill="#16222c"/><rect x="742" y="108.9" width="28" height="2.2" fill="#c0362c"/><rect x="742" y="114.9" width="28" height="2.2" fill="#2f5597"/><rect x="742" y="120.9" width="28" height="2.2" fill="#574060"/><rect x="742" y="126.9" width="28" height="2.2" fill="#1c1c1c"/><line x1="818.2" y1="121.2" x2="823.6" y2="126.4" stroke="#0a0a0a" stroke-width="5.2" stroke-linecap="round"/><circle cx="808.9" cy="111.8" r="9.4" fill="url(#lens)" stroke="#0a0a0a" stroke-width="2.6"/><line x1="803.9" y1="111.8" x2="813.9" y2="111.8" stroke="#0a0a0a" stroke-width="2.6"/><line x1="808.9" y1="106.8" x2="808.9" y2="116.8" stroke="#0a0a0a" stroke-width="2.6"/><line x1="864.2" y1="121.2" x2="869.6" y2="126.4" stroke="#0a0a0a" stroke-width="5.2" stroke-linecap="round"/><circle cx="854.9" cy="111.8" r="9.4" fill="url(#lens)" stroke="#0a0a0a" stroke-width="2.6"/><line x1="849.9" y1="111.8" x2="859.9" y2="111.8" stroke="#0a0a0a" stroke-width="2.6"/><line x1="910.3" y1="121.2" x2="915.7" y2="126.4" stroke="#0a0a0a" stroke-width="5.2" stroke-linecap="round"/><circle cx="901.0" cy="111.8" r="9.4" fill="url(#lens)" stroke="#0a0a0a" stroke-width="2.6"/><line x1="896.0" y1="109.5" x2="906.0" y2="109.5" stroke="#0a0a0a" stroke-width="2.4"/><line x1="896.0" y1="114.1" x2="906.0" y2="114.1" stroke="#0a0a0a" stroke-width="2.4"/><rect x="936" y="104" width="28" height="18" fill="#eceee8"/><rect x="936" y="106.9" width="28" height="2" fill="#c6c8c2"/><rect x="936" y="112.9" width="28" height="2" fill="#c6c8c2"/><rect x="936" y="118.9" width="28" height="2" fill="#c6c8c2"/><rect x="936" y="100.8" width="28" height="2.2" fill="#1c1c1c"/><rect x="936" y="126.9" width="28" height="2.2" fill="#1c1c1c"/><rect x="943.8" y="102" width="2" height="26" fill="#8a8a8a"/><rect x="953.9" y="102" width="2" height="26" fill="#8a8a8a"/><path d="M938.6,104.6 Q938,104 939.4,104.6 L945.4,110.6 Q946.2,111.6 945.4,112.6 L939.4,118.6 Q938,119.2 938.2,118 Z" fill="#3468b4"/><path d="M961.4,104.6 Q962,104 960.6,104.6 L954.6,110.6 Q953.8,111.6 954.6,112.6 L960.6,118.6 Q962,119.2 961.8,118 Z" fill="#3468b4"/></svg>
<svg class="a" style="left:0px;top:144px" width="60" height="44" viewBox="0 144 60 44"><defs><linearGradient id="bm" x1="0" y1="0" x2="0" y2="1"><stop offset="0" stop-color="#8db2dc"/><stop offset="1" stop-color="#5f96d6"/></linearGradient>
<linearGradient id="ap" x1="0" y1="0" x2="1" y2="1"><stop offset="0" stop-color="#8fb2dc"/><stop offset="1" stop-color="#6a9fd4"/></linearGradient></defs><path d="M16,152 Q16,151 17,151 L30.8,151 Q31.8,151 31.8,152 L31.8,178.2 Q31.8,179.4 30.8,178.6 L23.9,173.3 L17,178.6 Q16,179.4 16,178.2 Z" fill="url(#bm)"/></svg><svg class="a" style="left:2600px;top:144px" width="170" height="44" viewBox="2600 144 170 44"><defs><linearGradient id="ap" x1="0" y1="0" x2="1" y2="1"><stop offset="0" stop-color="#8fb2dc"/><stop offset="1" stop-color="#6a9fd4"/></linearGradient></defs><rect x="2624" y="151" width="48" height="28" rx="3.5" fill="url(#ap)"/><path d="M2633.2,161 L2652.6,161 L2652.6,157.8 Q2652.8,156.6 2654,157.4 L2663.6,164.2 Q2664.6,165 2663.6,165.8 L2654,172.6 Q2652.8,173.4 2652.6,172.2 L2652.6,169 L2633.2,169 Q2631.7,169 2631.7,167.5 L2631.7,162.5 Q2631.7,161 2633.2,161 Z" fill="#fff"/><path d="M2687,161.3 L2701,161.3 L2694,168.2 Z" fill="#4a4a4a"/><rect x="2722" y="163" width="16" height="4" fill="#3f3f3f"/><rect x="2728" y="157" width="4" height="16" fill="#3f3f3f"/></svg>
<!-- sort indicator -->
<svg class="a" style="left:982.5px;top:190.5px" width="14" height="8" viewBox="0 0 14 8"><path d="M3.2 5.8 L7 2.2 L10.8 5.8" fill="none" stroke="#6a6a6a" stroke-width="1.2"/></svg>
<!-- window border -->
<div class="a" style="left:0;top:0;width:2778px;height:2px;background:#7b7b7b"></div>
<div class="a" style="left:0;top:0;width:2px;height:1613px;background:#7b7b7b"></div>
<div class="a" style="left:2775px;top:0;width:3px;height:1613px;background:#7b7b7b"></div>
<div class="a" style="left:0;top:1611px;width:2778px;height:2px;background:#7b7b7b"></div>
</body></html>
